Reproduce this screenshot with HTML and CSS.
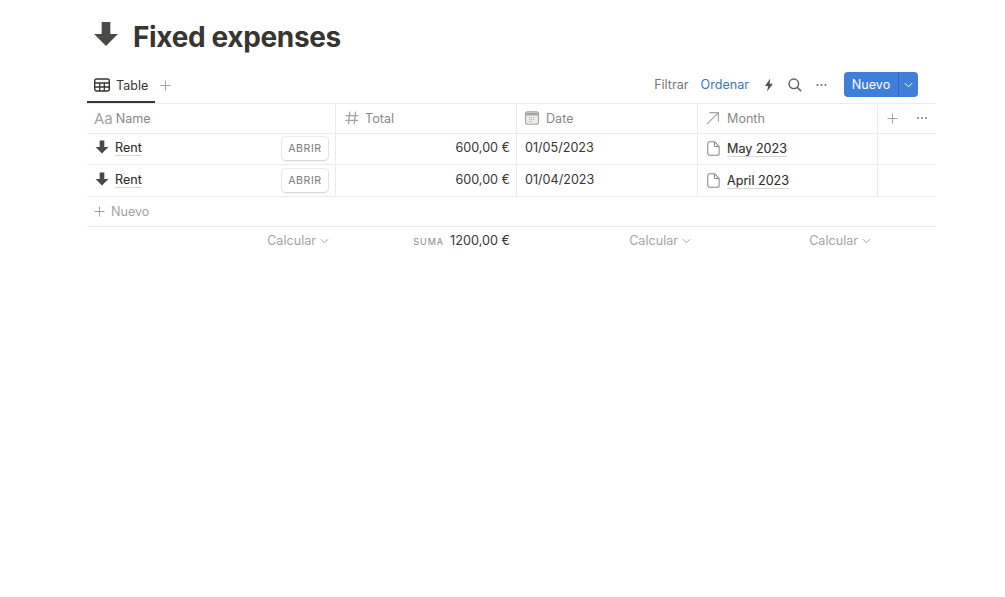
FILE: index.html
```html
<!DOCTYPE html>
<html lang="es">
<head>
<meta charset="utf-8">
<title>Fixed expenses</title>
<link rel="stylesheet" href="styles.css">
</head>
<body>
<svg class="sprite" width="0" height="0" aria-hidden="true">
  <symbol id="arrow" viewBox="0 0 24 24"><path d="M8 1h8v11h7L12 23 1 12h7z" fill="currentColor"/></symbol>
  <symbol id="doc" viewBox="0 0 14 16"><path d="M2.6.8h5.6l4.9 4.9v7.7a1.8 1.8 0 0 1-1.8 1.8H2.6a1.8 1.8 0 0 1-1.8-1.8V2.6A1.8 1.8 0 0 1 2.6.8zM8 1v3.4A1.4 1.4 0 0 0 9.4 5.8h3.6" fill="none" stroke="currentColor" stroke-width="1.1"/></symbol>
  <symbol id="dots" viewBox="0 0 12 4"><circle cx="2" cy="2" r="1.1" fill="currentColor"/><circle cx="6" cy="2" r="1.1" fill="currentColor"/><circle cx="10" cy="2" r="1.1" fill="currentColor"/></symbol>
  <symbol id="plus" viewBox="0 0 12 12"><path d="M6 .5v11M.5 6h11" fill="none" stroke="currentColor" stroke-width="1.1"/></symbol>
  <symbol id="caret" viewBox="0 0 10 6"><path d="M1 1l4 4 4-4" fill="none" stroke="currentColor" stroke-width="1.1"/></symbol>
</svg>
<main class="page">
  <header class="title-row">
    <svg class="title-icon"><use href="#arrow"/></svg>
    <h1>Fixed expenses</h1>
  </header>
  <div class="toolbar">
    <div class="tabs">
      <div class="tab">
        <svg class="tab-icon" viewBox="0 0 16 14"><rect x=".7" y="1" width="14.6" height="12" rx="2" fill="none" stroke="currentColor" stroke-width="1.4"/><path d="M.7 5h14.6M.7 9h14.6M5.7 5v8M10.3 5v8" fill="none" stroke="currentColor" stroke-width="1.3"/></svg>
        <span>Table</span>
      </div>
      <svg class="tab-add"><use href="#plus"/></svg>
    </div>
    <div class="actions">
      <span class="action">Filtrar</span>
      <span class="action active">Ordenar</span>
      <svg class="bolt" viewBox="0 0 10 14"><path d="M6.2.5L1 8h3.2L3 13.5 9 5.8H5.6z" fill="currentColor"/></svg>
      <svg class="search" viewBox="0 0 14 14"><circle cx="5.8" cy="5.8" r="4.8" fill="none" stroke="currentColor" stroke-width="1.4"/><path d="M9.2 9.2l4 4" stroke="currentColor" stroke-width="1.5" fill="none"/></svg>
      <svg class="more"><use href="#dots"/></svg>
      <div class="new-btn"><span class="new-label">Nuevo</span><span class="new-caret"><svg class="new-caret-icon"><use href="#caret"/></svg></span></div>
    </div>
  </div>
  <div class="table">
    <div class="row head">
      <div class="cell c1"><span class="aa">Aa</span><span>Name</span></div>
      <div class="cell c2"><svg class="h-icon" viewBox="0 0 14 14"><path d="M4.8 .6L3.4 13.4M10.6 .6L9.2 13.4M.6 4.6h12.8M.4 9.4h12.8" fill="none" stroke="currentColor" stroke-width="1.3"/></svg><span>Total</span></div>
      <div class="cell c3"><svg class="h-icon" viewBox="0 0 14 14"><rect x=".6" y=".8" width="12.8" height="12.4" rx="2" fill="#eeedec" stroke="currentColor" stroke-width="1.1"/><path d="M.6 1.6h12.8v2.8H.6z" fill="currentColor"/><path d="M4 6.5h6M4 8.5h6M4 10.5h4" stroke="currentColor" stroke-width=".9" stroke-dasharray="1 1" fill="none"/></svg><span>Date</span></div>
      <div class="cell c4"><svg class="h-icon" viewBox="0 0 14 14"><path d="M3.4 1.6h9v9M12.2 1.8L1.2 12.8" fill="none" stroke="currentColor" stroke-width="1.2"/></svg><span>Month</span></div>
      <div class="cell c5"><svg class="h-add"><use href="#plus"/></svg><svg class="h-more"><use href="#dots"/></svg></div>
    </div>
    <div class="row body">
      <div class="cell c1"><svg class="row-icon"><use href="#arrow"/></svg><span class="link">Rent</span><span class="open">ABRIR</span></div>
      <div class="cell c2 num">600,00 €</div>
      <div class="cell c3 val">01/05/2023</div>
      <div class="cell c4"><svg class="doc"><use href="#doc"/></svg><span class="link">May 2023</span></div>
      <div class="cell c5"></div>
    </div>
    <div class="row body">
      <div class="cell c1"><svg class="row-icon"><use href="#arrow"/></svg><span class="link">Rent</span><span class="open">ABRIR</span></div>
      <div class="cell c2 num">600,00 €</div>
      <div class="cell c3 val">01/04/2023</div>
      <div class="cell c4"><svg class="doc"><use href="#doc"/></svg><span class="link">April 2023</span></div>
      <div class="cell c5"></div>
    </div>
    <div class="add-row"><svg class="add-icon"><use href="#plus"/></svg><span>Nuevo</span></div>
    <div class="foot">
      <div class="fcell c1"><span>Calcular</span><svg class="foot-caret"><use href="#caret"/></svg></div>
      <div class="fcell c2"><span class="suma">SUMA</span><span class="sum">1200,00 €</span></div>
      <div class="fcell c3"><span>Calcular</span><svg class="foot-caret"><use href="#caret"/></svg></div>
      <div class="fcell c4"><span>Calcular</span><svg class="foot-caret"><use href="#caret"/></svg></div>
    </div>
  </div>
</main>
</body>
</html>
```
FILE: styles.css
```css
* { box-sizing: border-box; }
html, body { margin: 0; height: 100%; background: #fff; }
body { font-family: Inter, "Liberation Sans", sans-serif; color: #37352f; overflow: hidden; }
.sprite { display: block; width: 0; height: 0; }
svg { display: block; flex: none; }
.page { width: 849px; margin-left: 87px; }
.title-row { height: 72px; padding-top: 20px; display: flex; align-items: flex-start; }
.title-icon { width: 26px; height: 26px; margin: 1px 0 0 6px; color: #4a4945; }
h1 { margin: 0 0 0 14px; font-size: 28px; line-height: 34px; font-weight: 700; color: #37352f; letter-spacing: -.35px; }
.toolbar { height: 31px; display: flex; justify-content: space-between; padding-right: 18px; }
.tabs { display: flex; align-items: flex-start; }
.tab { width: 68px; height: 31px; padding: 6px 0 0 7px; display: flex; align-items: flex-start; gap: 6px; font-size: 12.6px; line-height: 15px; font-weight: 400; color: #37352f; border-bottom: 2px solid #37352f; }
.tab-icon { width: 16px; height: 14px; }
.tab-add { width: 11px; height: 11px; margin: 8px 0 0 5px; color: #a5a4a1; }
.actions { display: flex; align-items: flex-start; font-size: 12.6px; line-height: 16px; color: #787774; }
.action { margin-top: 5px; margin-right: 12px; }
.active { color: #3d78b6; margin-right: 14px; }
.bolt { width: 10px; height: 14px; margin: 6px 0 0 1px; color: #55534e; }
.search { width: 14px; height: 14px; margin: 6px 0 0 14px; color: #5f5e5a; }
.more { width: 13px; height: 4px; margin: 11px 0 0 13px; color: #787774; }
.new-btn { display: flex; margin-left: 16px; height: 25px; width: 74px; background: #3f7fd9; border-radius: 4px; color: #fff; }
.new-label { width: 54px; text-align: center; line-height: 25px; font-weight: 400; font-size: 12.6px; }
.new-caret { width: 20px; border-left: 1px solid #3568b0; display: flex; align-items: center; justify-content: center; }
.new-caret-icon { width: 9px; height: 6px; }
.table { width: 849px; border-top: 1px solid #ebebea; }
.row { display: flex; border-bottom: 1px solid #ebebea; }
.head { height: 30px; font-size: 12.6px; color: #8a8986; }
.body { height: 32px; font-size: 12.6px; color: #37352f; }
.head + .body { height: 31px; }
.body + .body { padding-top: 1px; }
.cell { display: flex; align-items: flex-start; border-right: 1px solid #ebebea; position: relative; }
.c1 { width: 249px; }
.c2 { width: 181px; }
.c3 { width: 181px; }
.c4 { width: 180px; }
.c5 { width: 58px; border-right: 0; }
.head .cell { align-items: center; padding: 0 0 1px 8px; gap: 7px; }
.aa { font-size: 15px; color: #a5a4a1; margin-left: -1px; margin-right: -4px; }
.h-icon { width: 14px; height: 14px; color: #a5a4a1; }
.head .c2 { padding-left: 9px; gap: 6px; }
.h-add { width: 11px; height: 11px; color: #a5a4a1; margin-left: 1px; }
.h-more { width: 12px; height: 4px; color: #8a8986; margin-left: 11px; }
.row-icon { width: 14px; height: 14px; margin: 6px 0 0 8px; color: #4a4945; }
.link { font-weight: 400; line-height: 15px; color: #2f2e2a; border-bottom: 1px solid #d9d9d7; -webkit-text-stroke: .12px #2f2e2a; }
.c1 .link { margin: 6px 0 0 6px; }
.c4 .link { margin: 7px 0 0 7px; }
.doc { width: 13px; height: 15px; margin: 7px 0 0 9px; color: #8a8986; }
.open { position: absolute; right: 7px; top: 3px; width: 46px; height: 23px; border-radius: 4px; background: #fff; box-shadow: 0 0 0 1px rgba(15,15,15,.08), 0 1px 2px rgba(15,15,15,.12); font-size: 10.5px; line-height: 23px; letter-spacing: .6px; text-align: center; color: #787774; font-weight: 400; }
.num { justify-content: flex-end; padding: 6px 6px 0 0; line-height: 15px; }
.val { padding: 6px 0 0 8px; line-height: 15px; }
.add-row { height: 30px; border-bottom: 1px solid #ebebea; display: flex; align-items: center; padding: 0 0 1px 7px; gap: 6px; font-size: 12.6px; color: #a5a4a1; }
.add-icon { width: 11px; height: 11px; }
.foot { display: flex; height: 26px; font-size: 12.6px; color: #a5a4a1; }
.fcell { display: flex; justify-content: flex-end; align-items: center; padding-right: 7px; gap: 4px; }
.suma { font-size: 9px; letter-spacing: 1px; color: #8a8986; margin: 3px 2px 0 0; }
.sum { color: #37352f; font-size: 12.7px; }
.foot-caret { width: 9px; height: 6px; margin-top: 2px; }
```
